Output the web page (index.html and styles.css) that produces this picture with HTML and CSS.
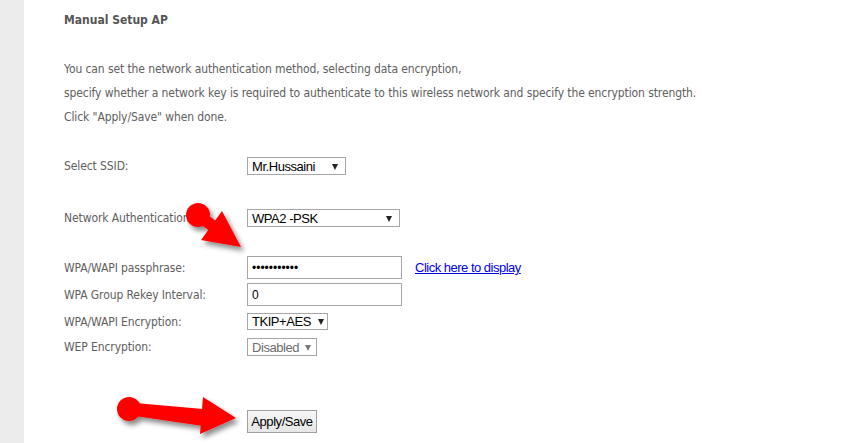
FILE: index.html
```html
<!DOCTYPE html>
<html lang="en">

<head>
    <meta charset="UTF-8" />
    <title>Manual Setup AP</title>
    <link rel="stylesheet" href="styles.css">
</head>

<body>
    <div class="page">
        <div class="rail"></div>

        <main class="content">
            <h1 class="title">Manual Setup AP</h1>

            <p class="intro">
                You can set the network authentication method, selecting data encryption,<br>
                specify whether a network key is required to authenticate to this wireless network and specify the encryption strength.<br>
                Click "Apply/Save" when done.
            </p>

            <!-- SSID -->
            <div class="field field-ssid">
                <label class="field-label">Select SSID:</label>
                <span class="select select-ssid"><span class="select-text">Mr.Hussaini</span></span>
            </div>

            <!-- Authentication -->
            <div class="field field-auth">
                <label class="field-label">Network Authentication:</label>
                <span class="select select-auth"><span class="select-text">WPA2 -PSK</span></span>
            </div>

            <!-- WPA settings -->
            <div class="field field-pass">
                <label class="field-label">WPA/WAPI passphrase:</label>
                <input class="text-input" type="password" value="12345678901" />
                <a class="show-link" href="#">Click here to display</a>
            </div>

            <div class="field field-rekey">
                <label class="field-label">WPA Group Rekey Interval:</label>
                <input class="text-input" type="text" value="0" />
            </div>

            <div class="field field-enc">
                <label class="field-label">WPA/WAPI Encryption:</label>
                <span class="select select-enc"><span class="select-text">TKIP+AES</span></span>
            </div>

            <div class="field field-wep">
                <label class="field-label">WEP Encryption:</label>
                <span class="select select-wep is-disabled"><span class="select-text">Disabled</span></span>
            </div>

            <div class="field field-apply">
                <button class="apply-btn">Apply/Save</button>
            </div>
        </main>

        <!-- red pointer arrows drawn over the form -->
        <svg class="arrows" width="852" height="443" viewBox="0 0 852 443">
            <defs>
                <filter id="shade" x="-20%" y="-20%" width="150%" height="160%">
                    <feDropShadow dx="3" dy="4" stdDeviation="2.5" flood-color="#000" flood-opacity="0.45" />
                </filter>
            </defs>
            <g fill="#ff0000" filter="url(#shade)">
                <circle cx="198" cy="215" r="12" />
                <polygon points="201,210 216,221 210,231 194,220" />
                <polygon points="222,211 241,247 201,240" />
            </g>
            <g fill="#ff0000" filter="url(#shade)">
                <circle cx="129" cy="409" r="12" />
                <polygon points="135,403 203,409 203,426 135,416" />
                <polygon points="203,397 236,418 200,434" />
            </g>
        </svg>
    </div>
</body>

</html>
```

FILE: styles.css
```css
body {
    margin: 0;
    padding: 0;
    background: #fff;
    font-family: "DejaVu Sans Condensed", "DejaVu Sans", sans-serif;
    font-size: 12px;
    color: #606060;
}

.page {
    position: relative;
    display: flex;
    width: 852px;
    height: 443px;
    overflow: hidden;
}

.rail {
    width: 24px;
    flex: none;
    background: #ececec;
}

.content {
    flex: 1;
    padding: 12px 0 0 40px;
}

.title {
    margin: 0 0 29px;
    font-size: 12px;
    line-height: 16px;
    font-weight: bold;
    color: #555;
}

.intro {
    margin: 0;
    line-height: 24px;
    letter-spacing: -0.1px;
}

/* --- form rows --- */
.field {
    display: flex;
    align-items: center;
}

.field-label {
    width: 183px;
    flex: none;
    white-space: nowrap;
    letter-spacing: -0.1px;
}

.field-ssid { margin-top: 28px; }
.field-auth { margin-top: 34px; }
.field-pass { margin-top: 29px; }
.field-rekey { margin-top: 4px; }
.field-enc { margin-top: 7px; }
.field-wep { margin-top: 8px; }
.field-apply { margin-top: 54px; padding-left: 183px; }

/* fake selects */
.select {
    position: relative;
    box-sizing: border-box;
    height: 18px;
    display: flex;
    align-items: center;
    padding-left: 4px;
    border: 1px solid #a6a6a6;
    background: #fff;
    font-family: "Liberation Sans", Arial, sans-serif;
    font-size: 13px;
    letter-spacing: -0.45px;
    color: #000;
}

.select::after {
    content: "";
    position: absolute;
    top: 6px;
    width: 0;
    height: 0;
    border-left: 3.5px solid transparent;
    border-right: 3.5px solid transparent;
    border-top: 6px solid #222;
}

.select-ssid { width: 99px; }
.select-ssid::after { right: 7px; }

.select-auth { width: 153px; }
.select-auth::after { right: 7px; }

.select-enc { width: 81px; height: 17px; }
.select-enc::after { right: 3px; top: 5px; }

.select-wep { width: 70px; }
.select-wep::after { right: 5px; }

.select.is-disabled {
    color: #6d6d6d;
}

.select.is-disabled::after {
    border-top-color: #777;
}

/* text inputs */
.text-input {
    box-sizing: border-box;
    width: 155px;
    height: 23px;
    margin: 0;
    padding: 0 4px;
    border: 1px solid #a6a6a6;
    font-family: "Liberation Sans", Arial, sans-serif;
    font-size: 12px;
    color: #000;
    outline: none;
}

.show-link {
    margin-left: 13px;
    font-family: "Liberation Sans", Arial, sans-serif;
    font-size: 13px;
    letter-spacing: -0.5px;
    color: #0000ee;
}

.apply-btn {
    box-sizing: border-box;
    width: 70px;
    height: 23px;
    padding: 0;
    border: 1px solid #a0a0a0;
    background: linear-gradient(#f6f6f6, #e6e6e6);
    font-family: "Liberation Sans", Arial, sans-serif;
    font-size: 13px;
    letter-spacing: -0.45px;
    color: #000;
}

.arrows {
    position: absolute;
    top: 0;
    left: 0;
    pointer-events: none;
}
```
